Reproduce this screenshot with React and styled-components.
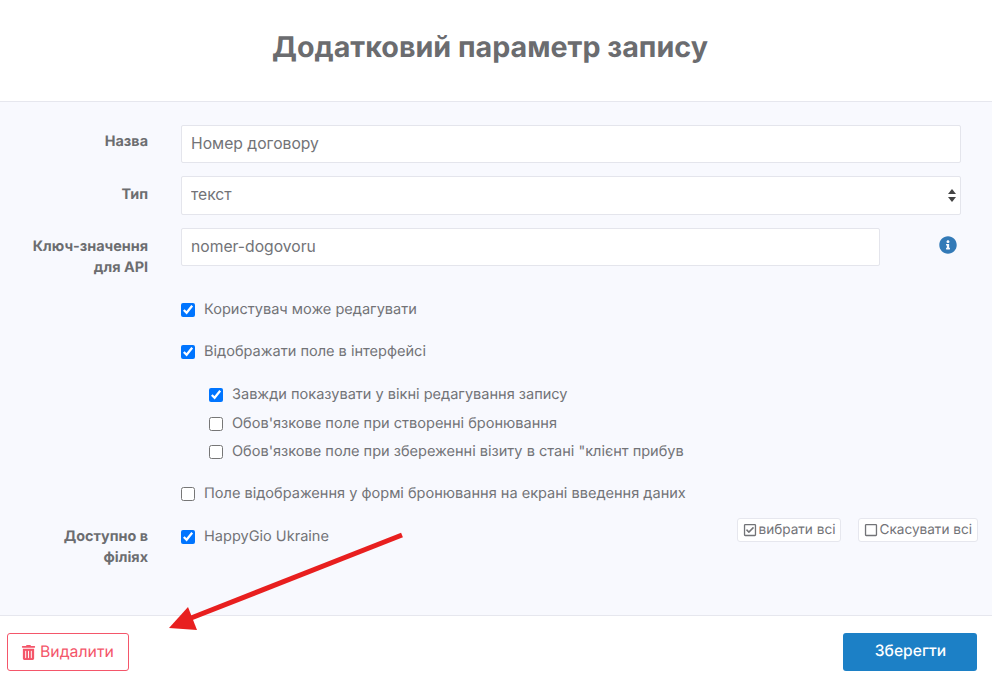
import React from "react"
import styled, { createGlobalStyle } from "styled-components"
import { FaTrashAlt, FaRegCheckSquare, FaRegSquare, FaInfoCircle } from "react-icons/fa"

const GlobalStyle = createGlobalStyle`
  html, body {
    margin: 0;
    padding: 0;
    background: #fff;
    font-family: Inter, "Liberation Sans", sans-serif;
    color: #6c6d70;
    text-rendering: geometricPrecision;
  }
  * {
    box-sizing: border-box;
  }
`

const App = () => {
  return (
    <Page>
      <GlobalStyle />
      <Header>
        <Title>Додатковий параметр запису</Title>
      </Header>
      <Body>
        <Row $height={38} $mb={13}>
          <Label $top={6}>Назва</Label>
          <TextInput defaultValue="Номер договору" />
        </Row>
        <Row $height={39} $mb={13}>
          <Label $top={8}>Тип</Label>
          <SelectWrap>
            <SelectBox defaultValue="text">
              <option value="text">текст</option>
            </SelectBox>
            <SelectArrows viewBox="0 0 8 13">
              <polygon points="4,0 8,5 0,5" />
              <polygon points="0,8 8,8 4,13" />
            </SelectArrows>
          </SelectWrap>
        </Row>
        <Row $height={38} $mb={33}>
          <Label $top={8}>
            Ключ-значення
            <br />
            для API
          </Label>
          <KeyField>
            <TextInput defaultValue="nomer-dogovoru" />
            <InfoIcon>
              <FaInfoCircle />
            </InfoIcon>
          </KeyField>
        </Row>
        <Options>
          <CheckRow $mb={22}>
            <Check defaultChecked />
            Користувач може редагувати
          </CheckRow>
          <CheckRow $mb={23}>
            <Check defaultChecked />
            Відображати поле в інтерфейсі
          </CheckRow>
          <SubOptions>
            <CheckRow>
              <Check defaultChecked />
              Завжди показувати у вікні редагування запису
            </CheckRow>
            <CheckRow>
              <Check />
              Обов'язкове поле при створенні бронювання
            </CheckRow>
            <CheckRow>
              <Check />
              Обов'язкове поле при збереженні візиту в стані "клієнт прибув
            </CheckRow>
          </SubOptions>
          <CheckRow $mb={16}>
            <Check />
            Поле відображення у формі бронювання на екрані введення даних
          </CheckRow>
        </Options>
        <BranchRow>
          <Label $top={7}>
            Доступно в
            <br />
            філіях
          </Label>
          <BranchContent>
            <CheckRow>
              <Check defaultChecked />
              HappyGio Ukraine
            </CheckRow>
            <BulkActions>
              <BulkButton>
                <FaRegCheckSquare />
                вибрати всі
              </BulkButton>
              <BulkButton>
                <FaRegSquare />
                Скасувати всі
              </BulkButton>
            </BulkActions>
          </BranchContent>
        </BranchRow>
      </Body>
      <Footer>
        <DeleteButton>
          <FaTrashAlt />
          Видалити
        </DeleteButton>
        <SaveButton>Зберегти</SaveButton>
      </Footer>
      <Arrow viewBox="0 0 992 682">
        <line x1="402" y1="535" x2="186" y2="620" stroke="#e81f1f" strokeWidth="5" />
        <polygon points="169,628 188,607 197,630" fill="#e81f1f" />
      </Arrow>
    </Page>
  )
}

export default App

const Page = styled.div`
  position: relative;
  width: 992px;
  height: 682px;
  overflow: hidden;
  display: flex;
  flex-direction: column;
`
const Header = styled.div`
  height: 102px;
  display: flex;
  align-items: center;
  justify-content: center;
  padding: 0 12px 8px 0;
  border-bottom: 1px solid #e6e7ee;
`
const Title = styled.h1`
  margin: 0;
  font-size: 28.7px;
  line-height: 36px;
  font-weight: 700;
  color: #6b6c6f;
`
const Body = styled.div`
  height: 514px;
  padding: 23px 31px 0 0;
  background: #f8f9fe;
  border-bottom: 1px solid #e6e7ee;
`
const Row = styled.div`
  display: grid;
  grid-template-columns: 148px 1fr;
  column-gap: 33px;
  height: ${(p) => p.$height}px;
  margin-bottom: ${(p) => p.$mb}px;
`
const Label = styled.div`
  font-size: 14.4px;
  line-height: 21px;
  font-weight: 700;
  text-align: right;
  padding-top: ${(p) => p.$top}px;
`
const TextInput = styled.input`
  width: 100%;
  height: 38px;
  padding: 0 9px 1px;
  border: 1px solid #e4e5ec;
  border-radius: 2px;
  background: #fff;
  font: 400 15.7px Inter, sans-serif;
  color: #727377;
  outline: none;
`
const SelectWrap = styled.div`
  position: relative;
`
const SelectBox = styled.select`
  appearance: none;
  width: 100%;
  height: 100%;
  padding: 0 9px 2px;
  border: 1px solid #e4e5ec;
  border-radius: 2px;
  background: #fff;
  font: 400 15.7px Inter, sans-serif;
  color: #727377;
  outline: none;
`
const SelectArrows = styled.svg`
  position: absolute;
  top: 13px;
  right: 5px;
  width: 8px;
  height: 13px;
  fill: #444;
`
const KeyField = styled.div`
  display: grid;
  grid-template-columns: 699px 1fr;
  column-gap: 59px;
`
const InfoIcon = styled.span`
  font-size: 18px;
  line-height: 18px;
  padding-top: 8px;
  color: #337ab7;
`
const Options = styled.div`
  padding-left: 181px;
`
const CheckRow = styled.label`
  display: flex;
  align-items: flex-start;
  height: 20px;
  margin-bottom: ${(p) => p.$mb || 0}px;
  font-size: 14.56px;
  line-height: 21px;
  color: #727377;
  white-space: nowrap;
`
const Check = styled.input.attrs({ type: "checkbox" })`
  width: 14px;
  height: 14px;
  margin: 4px 9px 0 0;
  flex: none;
`
const SubOptions = styled.div`
  display: flex;
  flex-direction: column;
  gap: 8.5px;
  padding-left: 28px;
  margin-bottom: 22px;
`
const BranchRow = styled.div`
  display: grid;
  grid-template-columns: 148px 1fr;
  column-gap: 33px;
`
const BranchContent = styled.div`
  display: flex;
  justify-content: space-between;
  align-items: flex-start;
  padding-top: 7px;
  margin-right: -17px;
`
const BulkActions = styled.div`
  display: flex;
  gap: 17px;
  margin-top: -8px;
`
const BulkButton = styled.button`
  display: flex;
  align-items: center;
  gap: 1px;
  height: 24px;
  padding: 0 5px;
  border: 1px solid #e6e7ee;
  border-radius: 3px;
  background: #fff;
  font: 400 13.6px Inter, sans-serif;
  color: #727377;
  text-rendering: geometricPrecision;
  svg {
    font-size: 14px;
  }
`
const Footer = styled.div`
  flex: 1;
  display: flex;
  justify-content: space-between;
  align-items: flex-start;
  padding: 17px 15px 0 7px;
  background: #fff;
`
const DeleteButton = styled.button`
  display: flex;
  align-items: center;
  gap: 4px;
  width: 122px;
  height: 38px;
  padding: 0 0 2px 13px;
  border: 1px solid #f4566a;
  border-radius: 3px;
  background: #fff;
  font: 400 15.8px Inter, sans-serif;
  color: #f4566a;
  text-rendering: geometricPrecision;
  svg {
    font-size: 15px;
    margin-top: 2px;
  }
`
const SaveButton = styled.button`
  width: 134px;
  height: 38px;
  padding: 0 0 3px 1px;
  border: none;
  border-radius: 3px;
  background: #1c80c6;
  font: 500 15.6px Inter, sans-serif;
  color: #fff;
  text-rendering: geometricPrecision;
`
const Arrow = styled.svg`
  position: absolute;
  inset: 0;
  width: 992px;
  height: 682px;
  pointer-events: none;
`
